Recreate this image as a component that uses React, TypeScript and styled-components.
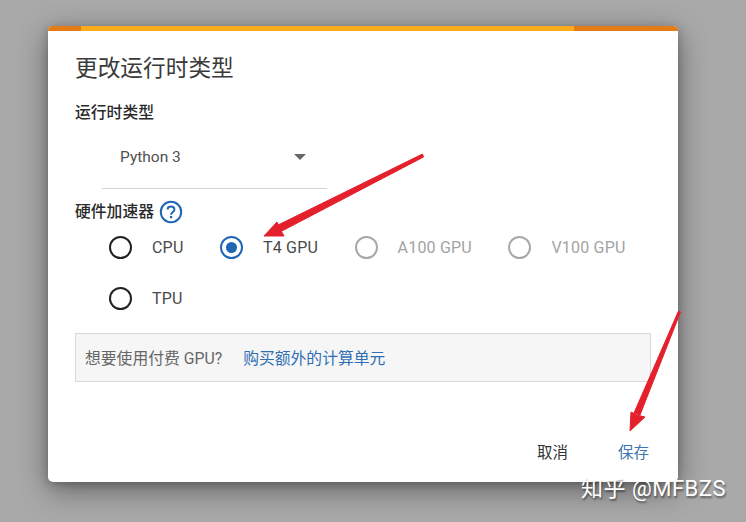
import React from 'react'
import styled, { createGlobalStyle } from 'styled-components'

const GlobalStyle = createGlobalStyle`
  html, body {
    margin: 0;
    height: 100%;
    overflow: hidden;
    background: #a9a9a9;
  }
`

const SANS = `Roboto, "Noto Sans CJK SC", sans-serif`

const radios = [
  { label: 'CPU' },
  { label: 'T4 GPU', checked: true },
  { label: 'A100 GPU', disabled: true },
  { label: 'V100 GPU', disabled: true },
  { label: 'TPU' },
]

const App = () => {
  return (
    <Page>
      <GlobalStyle />
      <Dialog>
        <TopBar>
          <BarEnd />
          <BarEnd />
        </TopBar>
        <Body>
          <Title>更改运行时类型</Title>
          <Label>运行时类型</Label>
          <Select>
            <span>Python 3</span>
            <Caret />
          </Select>
          <HardwareRow>
            <Label>硬件加速器</Label>
            <svg width="24" height="24" viewBox="0 0 24 24" fill="none">
              <circle cx="12" cy="12" r="10.2" stroke="#1f66b5" strokeWidth="2" />
              <path
                d="M8.6 9.6c0-2 1.5-3.2 3.4-3.2s3.4 1.2 3.4 3c0 2.6-3.3 2.7-3.3 5.4"
                stroke="#1f66b5"
                strokeWidth="2"
              />
              <rect x="11" y="16" width="2.2" height="2.2" fill="#1f66b5" />
            </svg>
          </HardwareRow>
          <RadioGroup>
            {radios.map((r) => (
              <RadioItem key={r.label}>
                <RadioCircle $checked={r.checked} $disabled={r.disabled} />
                <RadioText $disabled={r.disabled}>{r.label}</RadioText>
              </RadioItem>
            ))}
          </RadioGroup>
          <Notice>
            <span>想要使用付费 GPU?</span>
            <NoticeLink>购买额外的计算单元</NoticeLink>
          </Notice>
          <Actions>
            <ActionButton>取消</ActionButton>
            <ActionButton $primary>保存</ActionButton>
          </Actions>
        </Body>
      </Dialog>
      <Annotations width="746" height="522" viewBox="0 0 746 522">
        <g fill="#e4202c" stroke="#e4202c" strokeLinejoin="round">
          <path d="M422.5 154L423.5 157L280 232L276 226Z" strokeWidth="1" />
          <path d="M264 236L277 222L280 229L284 236Z" strokeWidth="1" />
          <path d="M678.5 311L680.5 312L640 415L634 413Z" strokeWidth="1" />
          <path d="M630 431L631 412L637 415L645 417Z" strokeWidth="1" />
        </g>
      </Annotations>
      <Watermark>知乎 @MFBZS</Watermark>
    </Page>
  )
}

export default App

const Page = styled.div`
  position: relative;
  box-sizing: border-box;
  width: 746px;
  height: 522px;
  padding: 26px 68px 0 48px;
  background: #a9a9a9;
  font-family: ${SANS};
  overflow: hidden;
`
const Dialog = styled.div`
  width: 630px;
  height: 456px;
  background: #fff;
  border-radius: 5px;
  overflow: hidden;
  box-shadow: 0 8px 30px rgba(0, 0, 0, 0.42), 0 2px 8px rgba(0, 0, 0, 0.22);
`
const TopBar = styled.div`
  display: flex;
  justify-content: space-between;
  height: 5px;
  background: #f9ab1b;
`
const BarEnd = styled.div`
  width: 33px;
  background: #e37b17;

  & + & {
    width: 104px;
  }
`
const Body = styled.div`
  padding: 22px 27px 0;
`
const Title = styled.div`
  font-size: 22.7px;
  line-height: 32px;
  margin-bottom: 16px;
  color: #3a3a3a;
`
const Label = styled.div`
  font-size: 15.8px;
  line-height: 24px;
  font-weight: 500;
  color: #2a2a2a;
`
const Select = styled.div`
  box-sizing: border-box;
  display: flex;
  align-items: center;
  justify-content: space-between;
  width: 225px;
  height: 59px;
  margin: 5px 0 0 27px;
  padding: 0 21px 4px 18px;
  border-bottom: 1px solid #d4d4d8;
  font-size: 15.5px;
  color: #505050;
`
const Caret = styled.div`
  width: 0;
  height: 0;
  border-left: 6.5px solid transparent;
  border-right: 6.5px solid transparent;
  border-top: 6px solid #666;
`
const HardwareRow = styled.div`
  display: flex;
  align-items: center;
  gap: 5px;
  height: 24px;
  margin-top: 11px;
`
const RadioGroup = styled.div`
  display: flex;
  flex-wrap: wrap;
  gap: 28px 36.5px;
  padding: 12px 0 0 34px;
`
const RadioItem = styled.div`
  display: flex;
  align-items: center;
  gap: 20px;
  height: 23px;
`
const RadioCircle = styled.div<{ $checked?: boolean; $disabled?: boolean }>`
  box-sizing: border-box;
  width: 23px;
  height: 23px;
  border-radius: 50%;
  border: 2px solid ${(p) => (p.$checked ? '#1f66b5' : p.$disabled ? '#a8a8a8' : '#222')};
  display: flex;
  align-items: center;
  justify-content: center;

  &::after {
    content: '';
    display: ${(p) => (p.$checked ? 'block' : 'none')};
    width: 11px;
    height: 11px;
    border-radius: 50%;
    background: #1f66b5;
  }
`
const RadioText = styled.span<{ $disabled?: boolean }>`
  font-size: 16px;
  letter-spacing: 0.2px;
  color: ${(p) => (p.$disabled ? '#a3a3a3' : '#4a4a4a')};
`
const Notice = styled.div`
  box-sizing: border-box;
  display: flex;
  align-items: center;
  gap: 21px;
  width: 576px;
  height: 49px;
  margin-top: 23px;
  padding: 0 9px;
  background: #f6f6f6;
  border: 1px solid #d8d8d8;
  font-size: 15.8px;
  color: #666;
`
const NoticeLink = styled.span`
  color: #2f6fb5;
`
const Actions = styled.div`
  display: flex;
  justify-content: flex-end;
  gap: 50px;
  margin-top: 60px;
  padding-right: 2px;
`
const ActionButton = styled.div<{ $primary?: boolean }>`
  font-size: 15.5px;
  line-height: 22px;
  color: ${(p) => (p.$primary ? '#3f75ae' : '#333')};
`
const Annotations = styled.svg`
  position: absolute;
  top: 0;
  left: 0;
  pointer-events: none;
`
const Watermark = styled.div`
  position: absolute;
  top: 475px;
  left: 581px;
  font-size: 22px;
  line-height: 28px;
  color: #fff;
  letter-spacing: 0.5px;
  white-space: nowrap;
  text-shadow: 1px 2px 2px rgba(0, 0, 0, 0.45);
`
